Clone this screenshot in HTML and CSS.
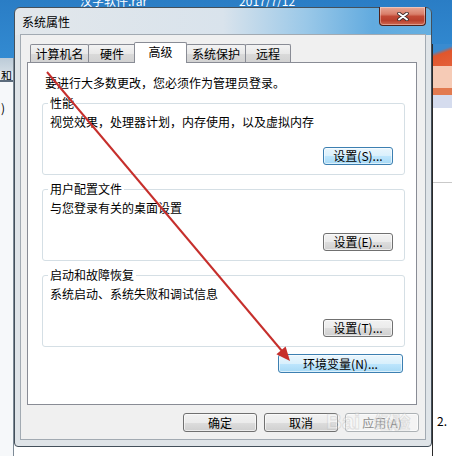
FILE: index.html
```html
<!DOCTYPE html>
<html lang="zh-CN">

<head>
    <meta charset="UTF-8">
    <meta name="viewport" content="width=device-width, initial-scale=1.0">
    <title>系统属性</title>
    <link rel="stylesheet" href="styles.css">
</head>

<body>
    <div class="desk">
        <!-- 背后的资源管理器窗口 -->
        <div class="explorer-top">
            <span class="file-name">汉字软件.rar</span>
            <span class="file-date">2017/7/12</span>
        </div>
        <div class="explorer-left">
            <div class="el-band"></div>
            <div class="el-row">和</div>
            <div class="el-line"></div>
            <div class="el-item">)</div>
        </div>
        <div class="explorer-right">
            <div class="er-glass"></div>
            <div class="er-pink"></div>
            <div class="er-orange"></div>
            <div class="er-lilac"></div>
            <div class="er-white"></div>
            <div class="er-rest"></div>
        </div>
        <p class="side-note">2.</p>

        <!-- 系统属性对话框 -->
        <div class="window">
            <div class="titlebar">
                <span class="title">系统属性</span>
                <div class="close">
                    <svg width="12" height="9" viewBox="0 0 12 9">
                        <path d="M2 1.5 L10 7.5 M10 1.5 L2 7.5" stroke="#3a2a28" stroke-width="3.6" stroke-linecap="round" />
                        <path d="M2 1.5 L10 7.5 M10 1.5 L2 7.5" stroke="#fff" stroke-width="2" stroke-linecap="round" />
                    </svg>
                </div>
            </div>
            <div class="client">
                <ul class="tabs">
                    <li class="tab t1">计算机名</li>
                    <li class="tab t2">硬件</li>
                    <li class="tab t3 active">高级</li>
                    <li class="tab t4">系统保护</li>
                    <li class="tab t5">远程</li>
                </ul>
                <div class="page">
                    <p class="intro">要进行大多数更改，您必须作为管理员登录。</p>
                    <fieldset class="group">
                        <legend>性能</legend>
                        <p class="desc">视觉效果，处理器计划，内存使用，以及虚拟内存</p>
                        <div class="row"><button class="btn hot">设置(S)...</button></div>
                    </fieldset>
                    <fieldset class="group">
                        <legend>用户配置文件</legend>
                        <p class="desc">与您登录有关的桌面设置</p>
                        <div class="row"><button class="btn">设置(E)...</button></div>
                    </fieldset>
                    <fieldset class="group">
                        <legend>启动和故障恢复</legend>
                        <p class="desc">系统启动、系统失败和调试信息</p>
                        <div class="row"><button class="btn">设置(T)...</button></div>
                    </fieldset>
                    <div class="row env-row"><button class="btn hot env">环境变量(N)...</button></div>
                </div>
                <div class="actions">
                    <button class="btn wide">确定</button>
                    <button class="btn wide">取消</button>
                    <button class="btn wide off">应用(A)</button>
                </div>
            </div>
        </div>

        <p class="watermark">Bai<span>经验</span></p>

        <svg class="arrow" width="452" height="456" viewBox="0 0 452 456">
            <line x1="47" y1="72" x2="282" y2="351" stroke="#c62f2c" stroke-width="2" />
            <polygon points="290,361 276.4,354.2 285.6,346.4" fill="#c62f2c" />
        </svg>
    </div>
</body>

</html>
```

FILE: styles.css
```css
* {
    margin: 0;
    padding: 0;
    list-style: none;
    box-sizing: border-box;
}

body {
    font-family: "Noto Sans CJK SC", "Liberation Sans", sans-serif;
    font-size: 12px;
    color: #000;
    background-color: #fff;
}

.desk {
    width: 452px;
    height: 456px;
    position: relative;
    overflow: hidden;
    background-color: #fff;
}

/* 背景窗口 */
.explorer-top {
    position: absolute;
    left: 0;
    top: 0;
    width: 452px;
    height: 60px;
    background: linear-gradient(#2a7dc5, #338bd2);
    color: #fff;
    display: flex;
    padding-left: 80px;
    gap: 92px;
}

.explorer-top span {
    line-height: 12px;
    margin-top: -5px;
}

.explorer-left {
    position: absolute;
    left: 0;
    top: 58px;
    width: 14px;
    height: 398px;
    display: flex;
    flex-direction: column;
    border-right: 1px solid #7d8a96;
}

.el-band {
    height: 13px;
    background: linear-gradient(#bccbd8, #cfdae3);
}

.el-row {
    height: 9px;
    background-color: #e3eaf0;
    line-height: 9px;
    font-size: 11px;
    text-indent: 1px;
    overflow: hidden;
}

.el-line {
    height: 2px;
    background-color: #5c6c7c;
}

.el-item {
    flex: 1;
    background-color: #f6f8fa;
    padding-top: 21px;
    padding-left: 1px;
    line-height: 10px;
}

.explorer-right {
    position: absolute;
    left: 432px;
    top: 44px;
    width: 20px;
    height: 412px;
    display: flex;
    flex-direction: column;
    border-left: 1px solid #2a2a2a;
}

.er-glass {
    height: 22px;
    background: linear-gradient(160deg, #3a8bd0 30%, #e0562c 45%, #e4603a);
}

.er-pink {
    height: 22px;
    background-color: #f6cbb6;
}

.er-orange {
    height: 7px;
    background-color: #e27a50;
}

.er-lilac {
    height: 13px;
    background-color: #d5dcee;
}

.er-white {
    height: 75px;
    background-color: #fff;
    border-bottom: 1px solid #c9c9c9;
}

.er-rest {
    flex: 1;
    background-color: #fff;
}

.side-note {
    position: absolute;
    left: 437px;
    top: 414px;
    line-height: 14px;
}

/* 对话框 */
.window {
    position: absolute;
    left: 14px;
    top: 7px;
    width: 418px;
    height: 440px;
    border: 1px solid #44505b;
    border-radius: 6px 6px 4px 4px;
    padding: 0 5px 6px 5px;
    background: linear-gradient(to right, #e2e7eb 0%, #d9e3ec 50%, #9ac8e8 70%, #62abdf 86%, #66afe0 100%) 0 0 / 100% 27px no-repeat, #dfe4e8;
}

.titlebar {
    height: 26px;
    display: flex;
    align-items: center;
    padding-left: 2px;
    position: relative;
}

.close {
    position: absolute;
    right: 0;
    top: -1px;
    width: 47px;
    height: 19px;
    border: 1px solid #4f2118;
    border-top: none;
    border-radius: 0 0 4px 4px;
    background: linear-gradient(#e8a896 0%, #d97e69 40%, #c24a36 52%, #b9402c 75%, #d06a52 100%);
    display: flex;
    align-items: center;
    justify-content: center;
    box-shadow: inset 0 0 0 1px rgba(255, 255, 255, .35);
}

.client {
    height: 406px;
    border: 1px solid #a2aab2;
    background-color: #f0f0f0;
    padding: 7px 8px 7px 6px;
}

.tabs {
    display: flex;
    align-items: flex-end;
    height: 20px;
    padding-left: 3px;
    position: relative;
    z-index: 1;
}

.tab {
    height: 18px;
    border: 1px solid #898c95;
    border-bottom: none;
    border-radius: 2px 2px 0 0;
    background: linear-gradient(#f3f3f3, #e8e8e8 50%, #dadada 51%, #d2d2d2);
    line-height: 17px;
    text-align: center;
    margin-left: -1px;
}

.t1 {
    width: 59px;
    margin-left: 0;
}

.t2 {
    width: 48px;
}

.t3 {
    width: 53px;
}

.t4 {
    width: 60px;
    margin-left: 0;
}

.t5 {
    width: 46px;
}

.tab.active {
    height: 21px;
    margin-bottom: -1px;
    margin-left: -2px;
    margin-right: -1px;
    background: #fff;
    line-height: 17px;
}

.page {
    height: 343px;
    border: 1px solid #898c95;
    background-color: #fff;
    padding: 12px 11px 0 14px;
}

.intro {
    line-height: 16px;
    margin-left: 3px;
    margin-bottom: 5px;
}

.group {
    border: 1px solid #d5dfe5;
    border-radius: 3px;
    padding: 0 11px 9px 7px;
    margin-bottom: 7px;
    min-inline-size: auto;
}

.group legend {
    line-height: 14px;
    padding: 0 2px;
    margin-left: -2px;
}

.desc {
    line-height: 16px;
    margin-top: 4px;
    margin-bottom: 17px;
}

.row {
    display: flex;
    justify-content: flex-end;
}

.env-row {
    margin-top: 5px;
    padding-right: 2px;
}

.btn {
    font-family: "Noto Sans CJK SC", "Liberation Sans", sans-serif;
    font-size: 12px;
    color: #000;
    width: 70px;
    height: 18px;
    line-height: 16px;
    border: 1px solid #707070;
    border-radius: 3px;
    background: linear-gradient(#f2f2f2, #ebebeb 50%, #dddddd 51%, #cfcfcf);
    box-shadow: inset 0 0 0 1px rgba(255, 255, 255, .6);
}

.btn.hot {
    border-color: #3c7fb1;
    background: linear-gradient(#eaf6fd, #d9f0fc 50%, #bee6fd 51%, #a7d9f5);
}

.btn.env {
    width: 125px;
    height: 19px;
}

.actions {
    display: flex;
    justify-content: flex-end;
    gap: 7px;
    margin-top: 8px;
    margin-right: -2px;
}

.btn.wide {
    width: 74px;
    height: 19px;
}

.btn.off {
    color: #8d8d8d;
    border-color: #adb2b5;
    background: #f4f4f4;
}

.watermark {
    position: absolute;
    left: 326px;
    top: 408px;
    font-family: "Liberation Sans", sans-serif;
    font-size: 22px;
    font-weight: bold;
    line-height: 26px;
    color: rgba(255, 255, 255, .35);
    -webkit-text-stroke: 1px rgba(170, 170, 170, .3);
}

.watermark span {
    font-family: "Noto Sans CJK SC", sans-serif;
    font-size: 18px;
    margin-left: 14px;
}

.arrow {
    position: absolute;
    left: 0;
    top: 0;
    pointer-events: none;
}
```
